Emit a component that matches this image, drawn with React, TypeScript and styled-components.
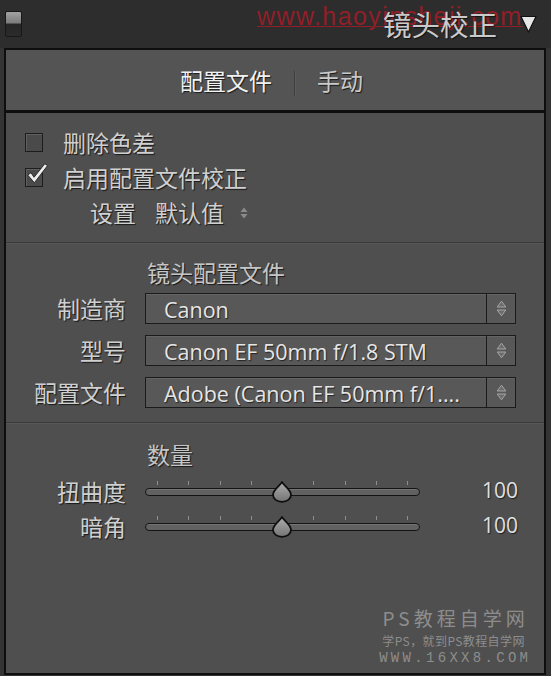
import React from "react";
import styled, { createGlobalStyle, css } from "styled-components";

const GlobalStyle = createGlobalStyle`
  html, body { margin: 0; padding: 0; background: #343434; }
  body { font-family: "Noto Sans CJK SC", "Noto Sans", sans-serif; }
  * { box-sizing: border-box; }
`;

const CJK = `"Noto Sans CJK SC", "Noto Sans", sans-serif`;
const LATIN = `"Open Sans", "Noto Sans CJK SC", sans-serif`;

const Screen = styled.div`
  width: 551px;
  height: 676px;
  overflow: hidden;
  display: flex;
  flex-direction: column;
  background: #343434;
`;

const Header = styled.header`
  position: relative;
  flex: none;
  height: 48px;
  display: flex;
  align-items: center;
  padding: 0 14px 0 5px;
  background: #2d2d2d;
`;

const PanelToggle = styled.div`
  width: 17px;
  height: 26px;
  margin-top: -1px;
  border: 1px solid #181818;
  border-radius: 2px;
  background: linear-gradient(
    to bottom,
    #a2a2a2 0%,
    #7c7c7c 46%,
    #262626 50%,
    #2b2b2b 100%
  );
`;

const HeaderTitle = styled.h1`
  position: relative;
  z-index: 1;
  margin: 0 0 0 auto;
  font-family: ${CJK};
  font-weight: 400;
  font-size: 28.5px;
  line-height: 1;
  color: #cacaca;
  text-shadow: 1px 1px 1px rgba(0, 0, 0, 0.6);
`;

const CollapseIcon = styled.svg`
  position: relative;
  z-index: 1;
  margin-left: 23px;
  flex: none;
`;

const SiteMark = styled.div`
  position: absolute;
  left: 257px;
  top: 4px;
  font-family: "Liberation Sans", Arial, sans-serif;
  font-size: 25px;
  line-height: 1;
  letter-spacing: 1.4px;
  white-space: nowrap;
  color: rgba(165, 28, 40, 0.85);
  text-decoration: underline;
  text-decoration-thickness: 1px;
  text-underline-offset: 1px;
  pointer-events: none;
`;

const Panel = styled.main`
  flex: 1;
  margin: 0 5px 1px 4px;
  border: 2px solid #0e0e0e;
  display: flex;
  flex-direction: column;
`;

const Tabs = styled.nav`
  flex: none;
  height: 63px;
  display: flex;
  align-items: center;
  justify-content: center;
  gap: 22px;
  padding-right: 7px;
  background: #545454;
  border-bottom: 3px solid #0e0e0e;
`;

const Tab = styled.span<{ $active?: boolean }>`
  font-family: ${CJK};
  font-size: 23px;
  line-height: 1;
  color: ${(p) => (p.$active ? "#f2f2f2" : "#cacaca")};
  text-shadow: 1px 1px 1px rgba(0, 0, 0, 0.7);
`;

const TabDivider = styled.span`
  width: 1px;
  height: 25px;
  margin-top: 6px;
  background: #3c3c3c;
  box-shadow: 1px 0 0 #5d5d5d;
`;

const Body = styled.div`
  flex: 1;
  display: flex;
  flex-direction: column;
  background: #4f4f4f;
`;

const Section = styled.section<{ $pt: number; $pb: number; $divider?: boolean }>`
  display: flex;
  flex-direction: column;
  padding: ${(p) => p.$pt}px 0 ${(p) => p.$pb}px;
  ${(p) =>
    p.$divider &&
    css`
      border-top: 1px solid #3a3a3a;
      box-shadow: inset 0 1px 0 #575757;
    `}
`;

const CheckRow = styled.label`
  height: 35px;
  display: flex;
  align-items: center;
  gap: 20px;
  padding-left: 19px;
`;

const CheckBox = styled.span`
  position: relative;
  width: 18px;
  height: 19px;
  flex: none;
  border: 1.5px solid #1d1d1d;
  background: #4a4a4a;
  box-shadow: inset 1px 1px 0 #5f5f5f;
`;

const CheckMark = styled.svg`
  position: absolute;
  left: -1px;
  top: -7px;
`;

const Label = styled.span<{ $size?: number }>`
  font-family: ${CJK};
  font-size: ${(p) => p.$size ?? 23}px;
  line-height: 1;
  color: #d0d0d0;
  white-space: nowrap;
  text-shadow: 1px 1px 1px rgba(0, 0, 0, 0.7);
`;

const SettingRow = styled.div`
  height: 35px;
  display: flex;
  align-items: center;
  padding-left: 84px;
`;

const SettingValue = styled.span`
  margin-left: 19px;
  display: flex;
  align-items: center;
  gap: 16px;
`;

const SectionTitle = styled.h2`
  margin: 0;
  height: 32px;
  display: flex;
  align-items: center;
  padding-left: 141px;
  font-family: ${CJK};
  font-weight: 400;
  font-size: 23px;
  line-height: 1;
  color: #c6c6c6;
  text-shadow: 1px 1px 1px rgba(0, 0, 0, 0.7);
`;

const FieldList = styled.div<{ $gap: number; $mt: number }>`
  display: flex;
  flex-direction: column;
  gap: ${(p) => p.$gap}px;
  margin-top: ${(p) => p.$mt}px;
`;

const FieldRow = styled.div<{ $h: number; $cols: string }>`
  height: ${(p) => p.$h}px;
  display: grid;
  grid-template-columns: ${(p) => p.$cols};
  column-gap: 19px;
  align-items: center;
`;

const FieldLabel = styled(Label)`
  text-align: right;
`;

const Select = styled.div`
  width: 371px;
  height: 31px;
  display: flex;
  border: 1.5px solid #1b1b1b;
  background: #585858;
  box-shadow: inset 0 1px 0 #646464;
`;

const SelectValue = styled.span`
  flex: 1;
  display: flex;
  align-items: center;
  padding: 2px 0 0 18px;
  font-family: ${LATIN};
  font-size: 21.5px;
  line-height: 1;
  color: #e6e6e6;
  white-space: nowrap;
  overflow: hidden;
  text-shadow: 1px 1px 1px rgba(0, 0, 0, 0.6);
`;

const Stepper = styled.span`
  width: 29px;
  flex: none;
  display: flex;
  align-items: center;
  justify-content: center;
  border-left: 1.5px solid #1b1b1b;
`;

const Track = styled.div`
  position: relative;
  width: 275px;
  height: 8px;
  border: 1.5px solid #141414;
  border-radius: 4px;
  background: #616161;
  box-shadow: inset 0 1px 0 #747474;
`;

const Tick = styled.span`
  position: absolute;
  top: -8px;
  width: 1px;
  height: 4px;
  background: #8e8e8e;
`;

const Thumb = styled.svg`
  position: absolute;
  top: -8px;
`;

const Value = styled.span`
  justify-self: end;
  padding-bottom: 2px;
  font-family: ${LATIN};
  font-size: 21px;
  line-height: 1;
  color: #e0e0e0;
  text-shadow: 1px 1px 1px rgba(0, 0, 0, 0.6);
`;

const Credit = styled.div`
  margin-top: auto;
  align-self: flex-end;
  margin-right: 16px;
  margin-bottom: 8px;
  display: flex;
  flex-direction: column;
  align-items: center;
  color: #8d8d8d;
`;

const CreditTitle = styled.span`
  font-family: ${CJK};
  font-size: 19px;
  line-height: 20px;
  letter-spacing: 4px;
  margin-right: -4px;
  margin-bottom: 5px;
`;

const CreditLine = styled.span`
  font-family: ${CJK};
  font-size: 12px;
  line-height: 16px;
  letter-spacing: 0.4px;
`;

const CreditUrl = styled.span`
  margin-top: 2px;
  font-family: "Liberation Mono", monospace;
  font-size: 14px;
  line-height: 14px;
  letter-spacing: 3.3px;
  margin-right: -3.3px;
`;

const StepperArrows = () => (
  <svg width="11" height="17" viewBox="0 0 11 17">
    <path d="M5.5 1.2 L9.8 7 L1.2 7 Z" fill="#6c6c6c" stroke="#a6a6a6" strokeWidth="1" strokeLinejoin="round" />
    <path d="M1.2 10 L9.8 10 L5.5 15.8 Z" fill="#6c6c6c" stroke="#a6a6a6" strokeWidth="1" strokeLinejoin="round" />
  </svg>
);

const SmallArrows = () => (
  <svg width="8" height="12" viewBox="0 0 8 12">
    <path d="M4 0.5 L7.5 5 L0.5 5 Z" fill="#8a8a8a" />
    <path d="M0.5 7 L7.5 7 L4 11.5 Z" fill="#8a8a8a" />
  </svg>
);

const TRACK_W = 275;

const Slider = ({ value, min, max }: { value: number; min: number; max: number }) => {
  const ratio = (value - min) / (max - min);
  const center = ratio * TRACK_W;
  const ticks = Array.from({ length: 9 }, (_, i) => 11 + i * 31.25).filter((_, i) => i !== 4);
  return (
    <Track>
      {ticks.map((x) => (
        <Tick key={x} style={{ left: `${x}px` }} />
      ))}
      <Thumb width="22" height="22" viewBox="0 0 22 22" style={{ left: `${center - 12.5}px` }}>
        <defs>
          <linearGradient id="thumbFill" x1="0" y1="0" x2="0" y2="1">
            <stop offset="0" stopColor="#adadad" />
            <stop offset="1" stopColor="#747474" />
          </linearGradient>
        </defs>
        <path
          d="M11 1.2 C12.6 4.2 20 8.6 20 13.8 C20 18 16 20.8 11 20.8 C6 20.8 2 18 2 13.8 C2 8.6 9.4 4.2 11 1.2 Z"
          fill="url(#thumbFill)"
          stroke="#0f0f0f"
          strokeWidth="1.8"
        />
      </Thumb>
    </Track>
  );
};

const selects = [
  { label: "制造商", value: "Canon" },
  { label: "型号", value: "Canon EF 50mm f/1.8 STM" },
  { label: "配置文件", value: "Adobe (Canon EF 50mm f/1...." },
];

const sliders = [
  { label: "扭曲度", value: 100 },
  { label: "暗角", value: 100 },
];

export default function App() {
  return (
    <>
      <GlobalStyle />
      <Screen>
        <Header>
          <PanelToggle />
          <SiteMark>www.haoyinsheji.com</SiteMark>
          <HeaderTitle>镜头校正</HeaderTitle>
          <CollapseIcon width="17" height="18" viewBox="0 0 17 18">
            <path d="M1 1.5 L16 1.5 L8.5 17 Z" fill="#e6e6e6" stroke="#111" strokeWidth="1.2" strokeLinejoin="round" />
          </CollapseIcon>
        </Header>
        <Panel>
          <Tabs>
            <Tab $active>配置文件</Tab>
            <TabDivider />
            <Tab>手动</Tab>
          </Tabs>
          <Body>
            <Section $pt={12} $pb={12}>
              <CheckRow>
                <CheckBox />
                <Label>删除色差</Label>
              </CheckRow>
              <CheckRow>
                <CheckBox>
                  <CheckMark width="24" height="24" viewBox="0 0 22 22">
                    <path
                      d="M2.5 12 L5.5 9.8 L8.3 14 L18.2 1.5 L20.6 3.4 L8.6 19 Z"
                      fill="#ececec"
                      stroke="#1e1e1e"
                      strokeWidth="0.8"
                      strokeLinejoin="round"
                    />
                  </CheckMark>
                </CheckBox>
                <Label>启用配置文件校正</Label>
              </CheckRow>
              <SettingRow>
                <Label>设置</Label>
                <SettingValue>
                  <Label>默认值</Label>
                  <SmallArrows />
                </SettingValue>
              </SettingRow>
            </Section>
            <Section $pt={13} $pb={14} $divider>
              <SectionTitle>镜头配置文件</SectionTitle>
              <FieldList $gap={11} $mt={5}>
                {selects.map((s) => (
                  <FieldRow key={s.label} $h={31} $cols="120px 371px">
                    <FieldLabel>{s.label}</FieldLabel>
                    <Select>
                      <SelectValue>{s.value}</SelectValue>
                      <Stepper>
                        <StepperArrows />
                      </Stepper>
                    </Select>
                  </FieldRow>
                ))}
              </FieldList>
            </Section>
            <Section $pt={15} $pb={0} $divider>
              <SectionTitle>数量</SectionTitle>
              <FieldList $gap={0} $mt={4}>
                {sliders.map((s) => (
                  <FieldRow key={s.label} $h={35} $cols="120px 275px 79px">
                    <FieldLabel>{s.label}</FieldLabel>
                    <Slider value={s.value} min={0} max={200} />
                    <Value>{s.value}</Value>
                  </FieldRow>
                ))}
              </FieldList>
            </Section>
            <Credit>
              <CreditTitle>PS教程自学网</CreditTitle>
              <CreditLine>学PS，就到PS教程自学网</CreditLine>
              <CreditUrl>WWW.16XX8.COM</CreditUrl>
            </Credit>
          </Body>
        </Panel>
      </Screen>
    </>
  );
}
